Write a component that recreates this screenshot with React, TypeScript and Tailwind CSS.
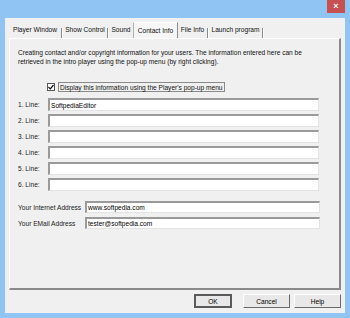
import React from 'react';

const tabs = [
	{ label: 'Player Window', w: 'w-[52px]' },
	{ label: 'Show Control', w: 'w-[44px]' },
	{ label: 'Sound', w: 'w-[24px]' },
	{ label: 'Contact Info', w: 'w-[45px]', active: true },
	{ label: 'File Info', w: 'w-[29px]' },
	{ label: 'Launch program', w: 'w-[53px]' },
];

const lines = ['SoftpediaEditor', '', '', '', '', ''];

function Sep() {
	return <div className="mt-[4px] h-[10px] w-[2px] border-l border-l-[#8a8a8a] border-r border-r-white" />;
}

function Field({ value, h = 'h-[13px]' }: { value: string; h?: string }) {
	return (
		<div
			className={`${h} flex-1 flex items-center bg-white border-t-2 border-l-2 border-t-[#9a9a9a] border-l-[#9a9a9a] border-r border-b border-r-[#e3e3e3] border-b-[#e3e3e3] pl-[1px] text-black`}
		>
			{value}
		</div>
	);
}

function Button({ label, w, primary }: { label: string; w: string; primary?: boolean }) {
	return (
		<div
			className={`${w} h-[14px] flex items-center justify-center bg-[#e8e8e8] ${
				primary ? 'border-2 border-[#5a5a5a]' : 'border border-t-white border-l-white border-r-[#6a6a6a] border-b-[#6a6a6a]'
			} text-black`}
		>
			{label}
		</div>
	);
}

export default function App() {
	return (
		<div
			className="w-[350px] h-[318px] bg-[#8fc4f3] flex flex-col px-[5px] pb-[5px] text-[6.6px] leading-[9px] text-[#111]"
			style={{ fontFamily: '"Liberation Sans", Arial, sans-serif' }}
		>
			{/* title bar */}
			<div className="h-[18px] flex justify-end">
				<div className="w-[18px] h-[13px] bg-[#c75050] flex items-center justify-center text-white text-[9px] font-bold leading-none">
					×
				</div>
			</div>

			{/* client */}
			<div className="flex-1 bg-[#f0f0f0] flex flex-col px-[4px]">
				{/* tabs */}
				<div className="h-[20px] flex items-end">
					{tabs.map((t, i) => (
						<React.Fragment key={t.label}>
							{t.active ? (
								<div
									className={`${t.w} h-[16px] flex justify-center pt-[3px] bg-[#f6f6f6] border-t border-l border-t-white border-l-[#b0b0b0] border-r border-r-[#8a8a8a] whitespace-nowrap`}
								>
									{t.label}
								</div>
							) : (
								<div className={`${t.w} h-[16px] flex justify-center pt-[3px] whitespace-nowrap`}>{t.label}</div>
							)}
							{!t.active && !tabs[i + 1]?.active && <Sep />}
						</React.Fragment>
					))}
				</div>

				{/* panel */}
				<div className="h-[252px] flex flex-col pl-[8px] pt-[9px] bg-[#f0f0f0] border-t border-l border-t-white border-l-white border-r-2 border-b-2 border-r-[#8a8a8a] border-b-[#8a8a8a]">
					<p className="whitespace-nowrap">
						Creating contact and/or copyright information for your users. The information entered here can be
						<br />
						retrieved in the intro player using the pop-up menu (by right clicking).
					</p>

					<div className="mt-[16px] ml-[29px] flex items-center gap-[3px] h-[10px]">
						<div className="w-[8px] h-[8px] bg-white border border-[#5a5a5a] flex items-center justify-center">
							<svg width="6" height="6" viewBox="0 0 6 6">
								<path d="M0.5 3 L2.3 4.8 L5.5 1" stroke="#111" strokeWidth="1.2" fill="none" />
							</svg>
						</div>
						<div className="h-[10px] flex items-center px-[1px] border border-[#8a8a8a] whitespace-nowrap">
							Display this information using the Player's pop-up menu
						</div>
					</div>

					<div className="mt-[6px] flex flex-col gap-[3px] pr-[20px]">
						{lines.map((v, i) => (
							<div key={i} className="flex items-center">
								<div className="w-[30px] shrink-0 text-[#222]">{i + 1}. Line:</div>
								<Field value={v} />
							</div>
						))}
					</div>

					<div className="mt-[10px] flex flex-col gap-[4px] pr-[19px]">
						<div className="flex items-center">
							<div className="w-[67px] shrink-0 text-[#222] whitespace-nowrap">Your Internet Address</div>
							<Field value="www.softpedia.com" h="h-[12px]" />
						</div>
						<div className="flex items-center">
							<div className="w-[67px] shrink-0 text-[#222] whitespace-nowrap">Your EMail Address</div>
							<Field value="tester@softpedia.com" h="h-[12px]" />
						</div>
					</div>
				</div>

				{/* buttons */}
				<div className="mt-[4px] flex justify-end">
					<Button label="OK" w="w-[38px]" primary />
					<div className="w-[11px]" />
					<Button label="Cancel" w="w-[47px]" />
					<div className="w-[4px]" />
					<Button label="Help" w="w-[47px]" />
				</div>
			</div>
		</div>
	);
}
